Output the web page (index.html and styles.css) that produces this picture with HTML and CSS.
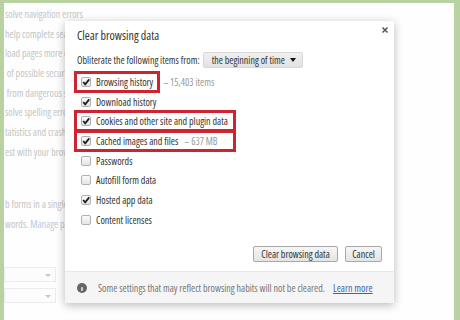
FILE: index.html
```html
<!DOCTYPE html>
<html lang="en">

<head>
  <meta charset="UTF-8">
  <title>Clear browsing data</title>
  <link rel="stylesheet" href="styles.css">
</head>

<body>
  <div class="page">
    <!-- faded settings page behind the dialog -->
    <div class="settings">
      <p class="line">solve navigation errors</p>
      <p class="line">help complete search</p>
      <p class="line">load pages more quickly</p>
      <p class="line">&nbsp;of possible security incidents</p>
      <p class="line">&nbsp;from dangerous sites</p>
      <p class="line">solve spelling errors</p>
      <p class="line">tatistics and crash reports</p>
      <p class="line">est with your browsing traffic</p>
      <p class="line gap">b forms in a single click</p>
      <p class="line">words. <span class="link">Manage passwords</span></p>
      <div class="picks">
        <div class="pick"><span class="pick-arrow"></span></div>
        <div class="pick"><span class="pick-arrow"></span></div>
      </div>
    </div>

    <div class="dialog">
      <div class="dialog-body">
        <div class="dialog-head">
          <h1>Clear browsing data</h1>
          <span class="close">
            <svg viewBox="0 0 8 8"><path d="M1.5 1.5 6.5 6.5M6.5 1.5 1.5 6.5" /></svg>
          </span>
        </div>

        <div class="from-row">
          <span>Obliterate the following items from:</span>
          <div class="select">
            <span>the beginning of time</span>
            <span class="select-arrow"></span>
          </div>
        </div>

        <ul class="items">
          <li>
            <label class="item marked">
              <span class="cb"><svg viewBox="0 0 10 10"><path d="M2.2 5 4.2 7.3 8.2 2.4" /></svg></span>
              Browsing history
            </label>
            <span class="meta">&ndash; 15,403 items</span>
          </li>
          <li>
            <label class="item">
              <span class="cb"><svg viewBox="0 0 10 10"><path d="M2.2 5 4.2 7.3 8.2 2.4" /></svg></span>
              Download history
            </label>
          </li>
          <li>
            <label class="item marked wide">
              <span class="cb"><svg viewBox="0 0 10 10"><path d="M2.2 5 4.2 7.3 8.2 2.4" /></svg></span>
              Cookies and other site and plugin data
            </label>
          </li>
          <li>
            <label class="item marked wide">
              <span class="cb"><svg viewBox="0 0 10 10"><path d="M2.2 5 4.2 7.3 8.2 2.4" /></svg></span>
              Cached images and files <span class="meta">&ndash; 637 MB</span>
            </label>
          </li>
          <li>
            <label class="item"><span class="cb"></span> Passwords</label>
          </li>
          <li>
            <label class="item"><span class="cb"></span> Autofill form data</label>
          </li>
          <li>
            <label class="item">
              <span class="cb"><svg viewBox="0 0 10 10"><path d="M2.2 5 4.2 7.3 8.2 2.4" /></svg></span>
              Hosted app data
            </label>
          </li>
          <li>
            <label class="item"><span class="cb"></span> Content licenses</label>
          </li>
        </ul>

        <div class="actions">
          <button class="btn btn-clear">Clear browsing data</button>
          <button class="btn btn-cancel">Cancel</button>
        </div>
      </div>

      <div class="dialog-foot">
        <svg class="info" viewBox="0 0 10 10">
          <circle cx="5" cy="5" r="5" />
          <rect x="4.3" y="4.2" width="1.4" height="3.6" />
          <circle cx="5" cy="2.8" r="0.8" />
        </svg>
        <span>Some settings that may reflect browsing habits will not be cleared.</span>
        <a href="#" class="learn">Learn more</a>
      </div>
    </div>
  </div>
</body>

</html>
```

FILE: styles.css
```css
body {
  margin: 0;
  padding: 0;
  font-family: "Open Sans", "Noto Sans", sans-serif;
  font-stretch: 75%;
  background: #b8d3a1;
}

.page {
  position: relative;
  width: 450px;
  height: 317px;
  margin-left: 4px;
  margin-top: 3px;
  background: #fefefe;
  overflow: hidden;
}

/* background settings page */
.settings {
  padding-top: 2px;
  padding-left: 1px;
}

.line {
  margin: 0;
  height: 19.7px;
  line-height: 19.7px;
  font-size: 10px;
  color: #c4c4c4;
  white-space: nowrap;
}

.line.gap {
  margin-top: 32.4px;
}

.link {
  color: #b9c9e2;
}

.picks {
  display: flex;
  flex-direction: column;
  gap: 6px;
  margin-top: 32.3px;
  margin-left: -1px;
}

.pick {
  position: relative;
  width: 52px;
  height: 15px;
  box-sizing: border-box;
  border: 1px solid #ececec;
  background: #fcfcfc;
}

.pick-arrow {
  position: absolute;
  right: 4px;
  top: 6px;
  border-left: 3px solid transparent;
  border-right: 3px solid transparent;
  border-top: 3px solid #c8c8c8;
}

/* dialog */
.dialog {
  position: absolute;
  left: 61px;
  top: 18px;
  width: 329px;
  height: 282px;
  background: #fff;
  box-shadow: 0 2px 9px rgba(0, 0, 0, 0.28);
  display: flex;
  flex-direction: column;
  font-size: 10px;
  color: #333;
}

.dialog-body {
  flex: 1;
  display: flex;
  flex-direction: column;
  padding: 7px 12px 0 12px;
}

.dialog-head {
  display: flex;
  justify-content: space-between;
}

h1 {
  margin: 0;
  font-size: 12px;
  font-weight: normal;
  line-height: 16px;
  color: #333;
}

.close svg {
  display: block;
  width: 8px;
  height: 8px;
  margin-top: -2px;
  margin-right: -7px;
  stroke: #555;
  stroke-width: 1.5;
}

.from-row {
  display: flex;
  align-items: center;
  gap: 3px;
  margin-top: 8px;
  height: 16px;
  white-space: nowrap;
}

.select {
  display: flex;
  align-items: center;
  justify-content: space-between;
  width: 100px;
  height: 16px;
  box-sizing: border-box;
  padding: 0 6px 0 8px;
  border: 1px solid #d6d6d6;
  border-radius: 2px;
  background: linear-gradient(#f0f0f0, #e2e2e2);
  color: #333;
}

.select-arrow {
  border-left: 3.5px solid transparent;
  border-right: 3.5px solid transparent;
  border-top: 4px solid #111;
}

.items {
  list-style: none;
  margin: 4px 0 0 0;
  padding: 0;
}

.items li {
  display: flex;
  align-items: center;
  height: 19.7px;
  white-space: nowrap;
}

.item {
  display: inline-flex;
  align-items: center;
  gap: 5px;
  height: 16px;
  padding: 0 4px;
  box-sizing: border-box;
}

.item.marked {
  outline: 3px solid #cf2331;
}

.item.wide {
  width: 156px;
}

.meta {
  color: #999;
  margin-left: 6px;
}

.item .meta {
  margin-left: 1px;
}

.cb {
  width: 10px;
  height: 10px;
  box-sizing: border-box;
  border: 1px solid #b0b0b0;
  border-radius: 2px;
  background: linear-gradient(#fafafa, #e4e4e4);
  flex-shrink: 0;
}

.cb svg {
  display: block;
  width: 10px;
  height: 10px;
  margin: -1px 0 0 -1px;
  fill: none;
  stroke: #1e1e1e;
  stroke-width: 1.8;
}

.actions {
  display: flex;
  justify-content: flex-end;
  gap: 7px;
  margin-top: auto;
  margin-bottom: 9px;
}

.btn {
  height: 16px;
  padding: 0;
  font-family: inherit;
  font-stretch: inherit;
  font-size: 10px;
  color: #333;
  white-space: nowrap;
  border: 1px solid #a8a8a8;
  border-radius: 2px;
  background: linear-gradient(#f6f6f6, #e4e4e4);
}

.btn-clear {
  width: 85px;
}

.btn-cancel {
  width: 37px;
}

.dialog-foot {
  display: flex;
  align-items: center;
  height: 32px;
  padding-left: 12px;
  background: #f5f5f5;
  border-top: 1px solid #e8e8e8;
  box-sizing: border-box;
  color: #777;
  white-space: nowrap;
}

.info {
  width: 10px;
  height: 10px;
  margin-right: 11px;
  fill: #666;
}

.info rect,
.info circle + circle {
  fill: #fff;
}

.learn {
  margin-left: 8px;
  color: #3a64b4;
}
```
